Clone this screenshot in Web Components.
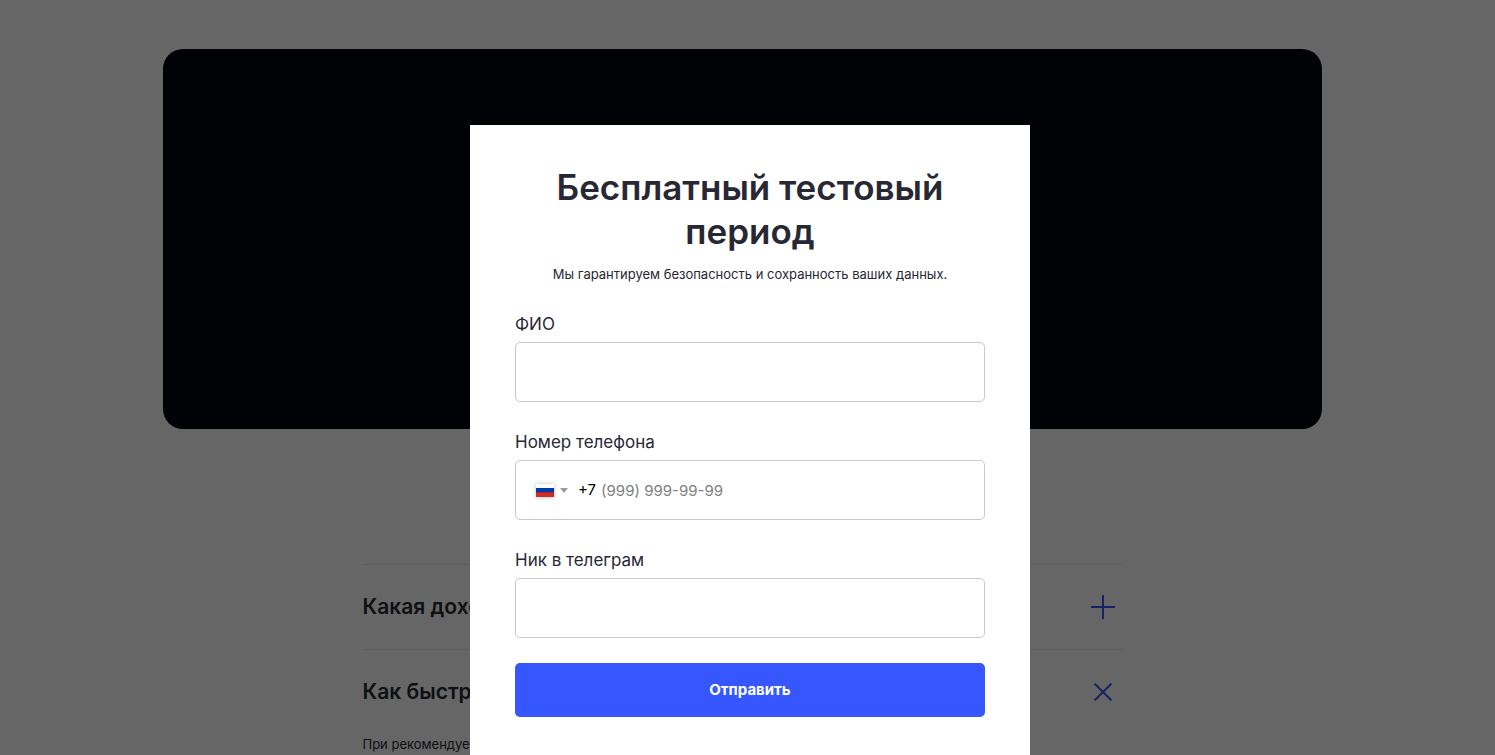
<!DOCTYPE html>
<html lang="ru">
<head>
<meta charset="utf-8">
<meta name="viewport" content="width=device-width, initial-scale=1">
<title>Бесплатный тестовый период</title>
<style>
  html, body { height: 100%; }
  body {
    margin: 0;
    overflow: hidden;
    background: #fff;
    color: #272833;
    font-family: Inter, "Liberation Sans", sans-serif;
  }
</style>
</head>
<body>
<page-content>
  <hero-banner></hero-banner>
  <faq-list>
    <faq-item><span slot="question">Какая доходность?</span></faq-item>
    <faq-item open><span slot="question">Как быстро?</span>При рекомендуемых</faq-item>
  </faq-list>
</page-content>
<modal-popup>
  <span slot="title">Бесплатный тестовый период</span>
  <span slot="descr">Мы гарантируем безопасность и сохранность ваших данных.</span>
  <text-field label="ФИО" name="name"></text-field>
  <phone-field label="Номер телефона" name="phone"></phone-field>
  <text-field label="Ник в телеграм" name="telegram"></text-field>
  <submit-button>Отправить</submit-button>
</modal-popup>
<script>
  const define = (name, html, setup) => {
    const template = document.createElement('template');
    template.innerHTML = html;
    customElements.define(name, class extends HTMLElement {
      constructor() {
        super();
        this.attachShadow({ mode: 'open' }).append(template.content.cloneNode(true));
      }
      connectedCallback() { if (setup) setup(this, this.shadowRoot); }
    });
  };

  const fieldStyle = `
    :host { display: block; }
    label { display: block; margin-bottom: 6px; font-size: 17px; line-height: 24px; color: #272833; }
    .box {
      display: flex; align-items: center; box-sizing: border-box; height: 60px;
      padding: 0 20px; border: 1px solid #c9c9c9; border-radius: 5px; background: #fff;
    }
    input {
      flex: 1; min-width: 0; height: 100%; padding: 0; border: 0; outline: 0; background: none;
      font: 15px Inter, "Liberation Sans", sans-serif; color: #000;
    }
    input::placeholder { color: #808080; opacity: 1; }`;

  define('page-content', `
    <style>
      :host { display: block; padding: 49px 10px 0 0; }
    </style>
    <slot></slot>`);

  define('hero-banner', `
    <style>
      :host {
        display: block; width: calc(100% - 40px); max-width: 1159px; height: 380px;
        margin: 0 auto 135px; border-radius: 20px; background: #04050f;
      }
    </style>`);

  define('faq-list', `
    <style>
      :host { display: block; width: calc(100% - 40px); max-width: 760px; margin: 0 auto; }
    </style>
    <slot></slot>`);

  define('faq-item', `
    <style>
      :host { display: block; border-top: 1px solid #eaeaea; }
      button {
        display: flex; align-items: center; justify-content: space-between;
        width: 100%; height: 84px; padding: 0 8px 0 0; border: 0; background: none;
        font: 600 21px/28px Inter, "Liberation Sans", sans-serif; color: #272833; text-align: left;
      }
      svg { width: 24px; height: 24px; stroke: #3657ff; stroke-width: 2; }
      :host([open]) svg { transform: rotate(45deg); }
      .answer { display: none; font-size: 13px; line-height: 20px; }
      :host([open]) .answer { display: block; }
    </style>
    <button type="button"><slot name="question"></slot>
      <svg viewBox="0 0 24 24" aria-hidden="true"><path d="M12 0V24M0 12H24"/></svg>
    </button>
    <div class="answer"><slot></slot></div>`,
    (host, root) => {
      root.querySelector('button').onclick = () => host.toggleAttribute('open');
    });

  define('modal-popup', `
    <style>
      :host {
        position: fixed; inset: 0; overflow: hidden; box-sizing: border-box;
        padding: 125px 0 0 5px; background: rgba(0, 0, 0, .6);
      }
      form {
        box-sizing: border-box; width: 100%; max-width: 560px; margin: 0 auto;
        padding: 40px 45px; background: #fff; min-height: 100vh;
      }
      h2 { margin: 0 0 11px; font-size: 35px; font-weight: 600; line-height: 44px; text-align: center; }
      p { margin: 0 0 28px; font-size: 13px; line-height: 20px; text-align: center; }
      .fields { display: flex; flex-direction: column; gap: 28px; }
      ::slotted(submit-button) { margin-top: -3px; }
    </style>
    <form>
      <h2><slot name="title"></slot></h2>
      <p><slot name="descr"></slot></p>
      <div class="fields"><slot></slot></div>
    </form>`);

  const bindField = (host, root) => {
    root.querySelector('label').textContent = host.getAttribute('label');
    root.querySelector('input').name = host.getAttribute('name');
  };

  define('text-field', `
    <style>${fieldStyle}</style>
    <label for="field"></label>
    <div class="box"><input id="field" type="text"></div>`, bindField);

  define('phone-field', `
    <style>${fieldStyle}
      button { display: flex; align-items: center; gap: 6px; padding: 0; border: 0; background: none; }
      .flag { width: 18px; height: 13px; box-shadow: 0 0 4px rgba(0, 0, 0, .25); }
      .arrow { width: 8px; height: 5px; }
      .code { margin: 0 5px 0 10px; font-size: 15px; line-height: 20px; color: #000; }
    </style>
    <label for="field"></label>
    <div class="box">
      <button type="button" aria-label="Россия">
        <svg class="flag" viewBox="0 0 18 13"><path fill="#fff" d="M0 0h18v13H0z"/><path fill="#0039a6" d="M0 4h18v5H0z"/><path fill="#d52b1e" d="M0 8.4h18V13H0z"/></svg>
        <svg class="arrow" viewBox="0 0 8 5"><path fill="#999" d="M0 0h8L4 5z"/></svg>
      </button>
      <span class="code">+7</span>
      <input id="field" type="tel" placeholder="(999) 999-99-99">
    </div>`, bindField);

  define('submit-button', `
    <style>
      :host { display: block; }
      button {
        display: block; width: 100%; height: 54px; border: 0; border-radius: 5px; background: #3657ff;
        font: 700 15px/20px Inter, "Liberation Sans", sans-serif; color: #fff;
      }
    </style>
    <button type="button"><slot></slot></button>`);
</script>
</body>
</html>
